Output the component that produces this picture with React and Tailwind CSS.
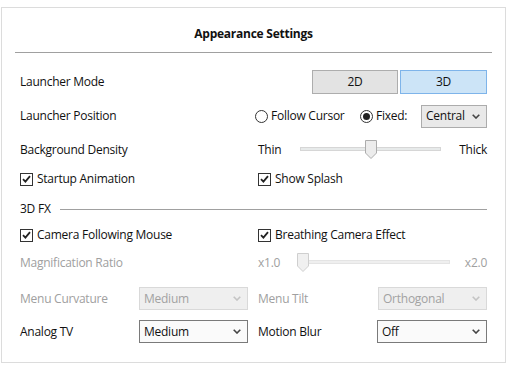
import React from "react";

function Check() {
  return (
    <span className="flex h-[13px] w-[13px] shrink-0 items-center justify-center border border-[#333] bg-white">
      <svg width="9" height="8" viewBox="0 0 9 8">
        <path d="M1 4.2 L3.4 6.6 L8 1.2" fill="none" stroke="#222" strokeWidth="1.8" />
      </svg>
    </span>
  );
}

function Radio({ on }) {
  return (
    <span className="flex h-[13px] w-[13px] shrink-0 items-center justify-center rounded-full border border-[#333] bg-white">
      {on ? <span className="h-[7px] w-[7px] rounded-full bg-[#222]" /> : null}
    </span>
  );
}

function Chevron({ disabled }) {
  return (
    <svg width="8" height="5" viewBox="0 0 8 5">
      <path d="M0.7 0.7 L4 4 L7.3 0.7" fill="none" stroke={disabled ? "#c4c4c4" : "#444"} strokeWidth="1.6" />
    </svg>
  );
}

function Select({ value, w, disabled, gray }) {
  const cls = disabled
    ? "border-[#d9d9d9] bg-[#efefef] text-[#a2a2a2]"
    : gray
    ? "border-[#acacac] bg-[#e9e9e9] text-[#111]"
    : "border-[#7a7a7a] bg-[#fafafa] text-[#111]";
  return (
    <div className={`flex h-[23px] shrink-0 items-center justify-between border pl-[4px] pr-[6px] ${cls} ${w}`}>
      <span>{value}</span>
      <Chevron disabled={disabled} />
    </div>
  );
}

function Slider({ track, thumbLeft, disabled }) {
  return (
    <div className={`relative h-[20px] shrink-0 ${track}`}>
      <div className={`absolute left-0 right-0 top-[7px] h-[4px] border ${disabled ? "border-[#e4e4e4] bg-[#efefef]" : "border-[#d6d6d6] bg-[#e7eaea]"}`} />
      <svg className="absolute top-0" style={{ left: thumbLeft }} width="12" height="19" viewBox="0 0 12 19">
        <path d="M0.5 0.5 H11.5 V13 L6 18.5 L0.5 13 Z" fill={disabled ? "#f0f0f0" : "#ececec"} stroke={disabled ? "#cfcfcf" : "#acacac"} />
      </svg>
    </div>
  );
}

export default function App() {
  return (
    <div className="h-[365px] w-[507px] bg-white pt-[7px] pl-[1px] text-[12px] tracking-[-0.25px] text-[#111]" style={{ fontFamily: '"Open Sans", "Noto Sans", sans-serif' }}>
      <div className="h-[356px] w-[505px] border border-[#dcdcdc]">
        <div className="flex h-[44px] items-end justify-center pb-[9px] font-bold">Appearance Settings</div>
        <div className="mx-[13px] h-px bg-[#a0a0a0]" />

        <div className="ml-[18px] mr-[18px]">
          <div className="mt-[17px] flex h-[24px] items-center">
            <span className="w-[292px]">Launcher Mode</span>
            <div className="flex h-[24px] w-[86px] items-center justify-center border border-[#adadad] bg-[#e3e3e3]">2D</div>
            <div className="ml-[2px] flex h-[24px] w-[87px] items-center justify-center border border-[#7eb4ea] bg-[#cce4f7]">3D</div>
          </div>

          <div className="mt-[10px] flex h-[24px] items-center">
            <span className="w-[235px]">Launcher Position</span>
            <Radio />
            <span className="ml-[3px] w-[89px]">Follow Cursor</span>
            <Radio on />
            <span className="ml-[3px] w-[45px]">Fixed:</span>
            <Select value="Central" w="w-[66px]" gray />
          </div>

          <div className="mt-[10px] flex h-[24px] items-center">
            <span className="w-[238px]">Background Density</span>
            <span className="w-[42px]">Thin</span>
            <Slider track="w-[141px]" thumbLeft={65} />
            <span className="ml-auto">Thick</span>
          </div>

          <div className="mt-[7px] flex h-[20px] items-center">
            <div className="flex w-[238px] items-center gap-[4px]"><Check />Startup Animation</div>
            <div className="flex items-center gap-[4px]"><Check />Show Splash</div>
          </div>

          <div className="mt-[10px] flex h-[20px] items-center">
            <span className="w-[40px]">3D FX</span>
            <div className="h-px flex-1 bg-[#a0a0a0]" />
          </div>

          <div className="mt-[6px] flex h-[20px] items-center">
            <div className="flex w-[238px] items-center gap-[4px]"><Check />Camera Following Mouse</div>
            <div className="flex items-center gap-[4px]"><Check />Breathing Camera Effect</div>
          </div>

          <div className="mt-[8px] flex h-[20px] items-center text-[#a0a0a0]">
            <span className="w-[238px]">Magnification Ratio</span>
            <span className="w-[39px]">x1.0</span>
            <Slider track="w-[153px]" thumbLeft={0} disabled />
            <span className="ml-auto">x2.0</span>
          </div>

          <div className="mt-[14px] flex h-[23px] items-center">
            <span className="w-[119px] text-[#a0a0a0]">Menu Curvature</span>
            <Select value="Medium" w="w-[109px]" disabled />
            <span className="ml-[10px] w-[120px] text-[#a0a0a0]">Menu Tilt</span>
            <Select value="Orthogonal" w="w-[109px]" disabled />
          </div>

          <div className="mt-[10px] flex h-[23px] items-center">
            <span className="w-[119px]">Analog TV</span>
            <Select value="Medium" w="w-[109px]" />
            <span className="ml-[10px] w-[119px]">Motion Blur</span>
            <Select value="Off" w="w-[110px]" />
          </div>
        </div>
      </div>
    </div>
  );
}
